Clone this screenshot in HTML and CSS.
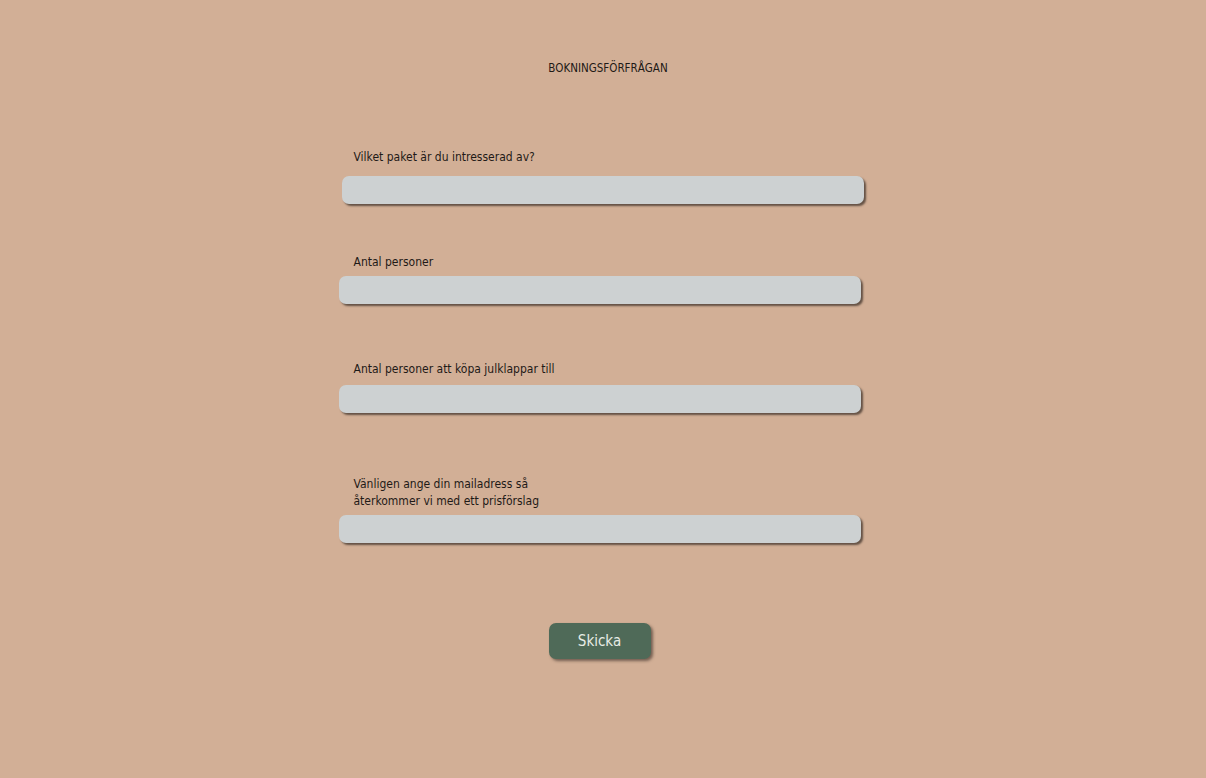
FILE: index.html
```html
<!DOCTYPE html>
<html lang="sv">
<head>
<meta charset="utf-8">
<title>Bokningsförfrågan</title>
<link rel="stylesheet" href="styles.css">
</head>
<body>
<main class="page">
  <h1 class="title">BOKNINGSFÖRFRÅGAN</h1>
  <form class="form">
    <div class="field field-1">
      <label class="label" for="paket">Vilket paket är du intresserad av?</label>
      <input class="input input-shift" id="paket" type="text">
    </div>
    <div class="field field-2">
      <label class="label" for="antal">Antal personer</label>
      <input class="input" id="antal" type="text">
    </div>
    <div class="field field-3">
      <label class="label" for="julklappar">Antal personer att köpa julklappar till</label>
      <input class="input" id="julklappar" type="text">
    </div>
    <div class="field field-4">
      <label class="label" for="mail">Vänligen ange din mailadress så<br>återkommer vi med ett prisförslag</label>
      <input class="input" id="mail" type="email">
    </div>
    <div class="actions">
      <button class="button" type="button">Skicka</button>
    </div>
  </form>
</main>
</body>
</html>
```

FILE: styles.css
```css
* { box-sizing: border-box; }

html, body {
  margin: 0;
  padding: 0;
  background: #d2af96;
}

body {
  font-family: "DejaVu Sans Condensed", "Liberation Sans", sans-serif;
  color: #1f1a17;
  min-height: 778px;
}

.page {
  display: flex;
  flex-direction: column;
  align-items: center;
}

.title {
  margin: 60px 0 0 10px;
  font-size: 11.5px;
  font-weight: 400;
  line-height: 17px;
  color: #1f1a17;
}

.form {
  width: 522px;
  margin-left: -7px;
  display: flex;
  flex-direction: column;
}

.field {
  display: flex;
  flex-direction: column;
}

.label {
  display: block;
  font-size: 12px;
  line-height: 17px;
  padding-left: 15px;
  color: #1f1a17;
}

.field-1 { margin-top: 72px; }
.field-1 .label { margin-bottom: 10px; }
.field-2 { margin-top: 50px; }
.field-2 .label { margin-bottom: 5px; }
.field-3 { margin-top: 57px; }
.field-3 .label { margin-bottom: 7px; }
.field-4 { margin-top: 63px; }
.field-4 .label { margin-bottom: 5px; }

.input {
  width: 522px;
  height: 28px;
  border: none;
  border-radius: 7px;
  background: #cdd1d2;
  box-shadow: 2px 2px 2px rgba(40, 30, 25, 0.65);
  outline: none;
  padding: 0 12px;
  font: inherit;
}

.input-shift { margin-left: 3px; }

.actions {
  display: flex;
  justify-content: center;
  margin-top: 80px;
}

.button {
  width: 102px;
  height: 36px;
  border: none;
  border-radius: 7px;
  background: #4f6a58;
  color: #e8ece6;
  font-family: inherit;
  font-size: 15px;
  box-shadow: 2px 2px 3px rgba(40, 30, 25, 0.55);
  cursor: pointer;
}
```
